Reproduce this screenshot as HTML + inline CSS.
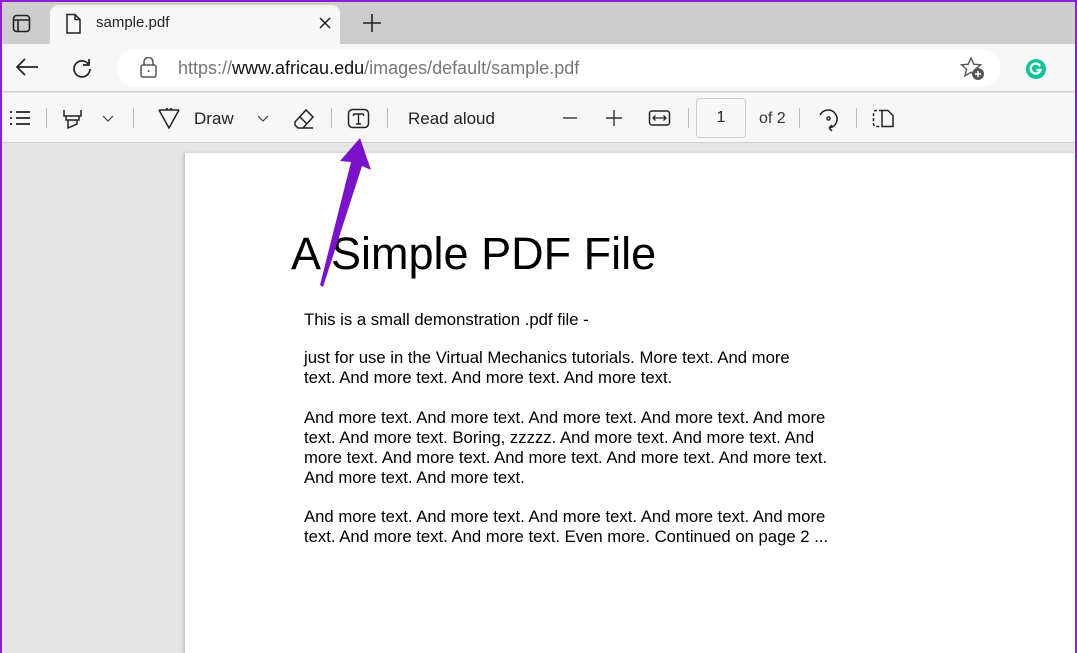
<!DOCTYPE html>
<html><head><style>
*{margin:0;padding:0;box-sizing:border-box}
html,body{width:1077px;height:653px;overflow:hidden}
body{font-family:"Liberation Sans",sans-serif;background:#e6e6e6;position:relative}
.frame{position:absolute;left:0;top:0;width:1077px;height:653px;border:2px solid #8a1fd6;border-bottom:none;pointer-events:none;z-index:10}
.tabbar{position:absolute;left:0;top:0;width:1077px;height:44px;background:#cdcdcd}
.tab{position:absolute;left:50px;top:5px;width:290px;height:39px;background:#f7f7f7;border-radius:8px 8px 0 0}
.nav{position:absolute;left:0;top:44px;width:1077px;height:48px;background:#f7f7f7;border-bottom:1px solid #d0d0d0}
.url{position:absolute;left:117px;top:5px;width:883px;height:38px;background:#fff;border-radius:19px}
.tool{position:absolute;left:0;top:93px;width:1077px;height:50px;background:#f7f7f7;border-bottom:1px solid #cfcfcf}
.t{position:absolute;font-size:17px;color:#222}
.sep{position:absolute;top:108px;width:1px;height:20px;background:#bbb}
.page{position:absolute;left:185px;top:153px;width:892px;height:500px;background:#fff;box-shadow:-2px 0 3px rgba(0,0,0,.15)}
.body{position:absolute;left:304px;font-size:16.7px;line-height:20px;color:#000;white-space:nowrap}
svg{position:absolute}
</style></head><body>
<div class="tabbar"><div class="tab"></div></div>
<svg style="left:12px;top:14px" width="20" height="20"><rect x="1.5" y="1.5" width="16" height="16" rx="3" fill="none" stroke="#222" stroke-width="1.6"/><path d="M1.5 6H17.5M6 6V17.5" stroke="#222" stroke-width="1.6"/></svg>
<svg style="left:64px;top:13px" width="20" height="22"><path d="M3 1.5H11L16 6.5V20H3Z M11 1.5V6.5H16" fill="none" stroke="#222" stroke-width="1.5"/></svg>
<div class="t" style="left:96px;top:14px;font-size:15px">sample.pdf</div>
<svg style="left:318px;top:16px" width="14" height="14"><path d="M2 2L12 12M12 2L2 12" stroke="#222" stroke-width="1.5"/></svg>
<svg style="left:362px;top:13px" width="20" height="20"><path d="M10 1V19M1 10H19" stroke="#222" stroke-width="1.6"/></svg>
<div class="nav"><div class="url"></div></div>
<svg style="left:14px;top:57px" width="26" height="20"><path d="M24 10H3M11 2L3 10L11 18" fill="none" stroke="#222" stroke-width="1.7"/></svg>
<svg style="left:70px;top:56px" width="24" height="24"><path d="M19 9A8 8 0 1 0 20 13M19 3V9H13" fill="none" stroke="#222" stroke-width="1.7"/></svg>
<svg style="left:139px;top:57px" width="20" height="22"><rect x="2" y="8" width="15" height="12" rx="2" fill="none" stroke="#555" stroke-width="1.5"/><path d="M5 8V5A4.5 4.5 0 0 1 14 5V8" fill="none" stroke="#555" stroke-width="1.5"/><circle cx="9.5" cy="14" r="1" fill="#555"/></svg>
<div class="t" style="left:178px;top:58px;font-size:18px;color:#777">https://<span style="color:#111">www.africau.edu</span>/images/default/sample.pdf</div>
<svg style="left:960px;top:56px" width="26" height="26"><path d="M11 2L13.8 8.2L20.5 8.8L15.4 13.2L17 19.8L11 16.3L5 19.8L6.6 13.2L1.5 8.8L8.2 8.2Z" fill="none" stroke="#555" stroke-width="1.4"/><circle cx="18" cy="18" r="6" fill="#555"/><path d="M18 15V21M15 18H21" stroke="#fff" stroke-width="1.5"/></svg>
<svg style="left:1025px;top:58px" width="22" height="22"><circle cx="11" cy="11" r="10" fill="#15c39a"/><path d="M15 8A5 5 0 1 0 15.5 12H11.5" fill="none" stroke="#fff" stroke-width="2.2"/></svg>
<div class="tool"></div>
<svg style="left:9px;top:110px" width="22" height="16"><path d="M1 2H3M1 8H3M1 14H3M7 2H21M7 8H21M7 14H21" stroke="#222" stroke-width="1.7"/></svg>
<div class="sep" style="left:46px"></div>
<svg style="left:62px;top:108px" width="22" height="22"><path d="M2 2V8H19V2M4 8V12H17V8M6 12V20L15 16V12" fill="none" stroke="#222" stroke-width="1.5"/></svg>
<svg style="left:102px;top:115px" width="12" height="8"><path d="M1 1L6 6L11 1" fill="none" stroke="#444" stroke-width="1.2"/></svg>
<div class="sep" style="left:133px"></div>
<svg style="left:158px;top:108px" width="22" height="22"><path d="M1 2H21M1 2L11 20L21 2M8 2L11 -2L14 2" fill="none" stroke="#222" stroke-width="1.5"/></svg>
<div class="t" style="left:194px;top:109px">Draw</div>
<svg style="left:257px;top:115px" width="12" height="8"><path d="M1 1L6 6L11 1" fill="none" stroke="#444" stroke-width="1.2"/></svg>
<svg style="left:292px;top:107px" width="24" height="24"><path d="M3 15L14 3L21 10L11 21H6L3 18Z M8 10L15 17 M11 21H21" fill="none" stroke="#222" stroke-width="1.5"/></svg>
<div class="sep" style="left:331px"></div>
<svg style="left:347px;top:108px" width="24" height="22"><rect x="1.5" y="1.5" width="20" height="18" rx="4" fill="none" stroke="#222" stroke-width="1.5"/><path d="M6.5 6H16.5M11.5 6V16M9 16H14M6.5 6V8M16.5 6V8" fill="none" stroke="#222" stroke-width="1.4"/></svg>
<div class="sep" style="left:387px"></div>
<div class="t" style="left:408px;top:109px">Read aloud</div>
<svg style="left:562px;top:110px" width="16" height="16"><path d="M1 8H15" stroke="#333" stroke-width="1.4"/></svg>
<svg style="left:605px;top:109px" width="18" height="18"><path d="M1 9H17M9 1V17" stroke="#333" stroke-width="1.4"/></svg>
<svg style="left:648px;top:109px" width="24" height="18"><rect x="1.5" y="2" width="20" height="14" rx="2.5" fill="none" stroke="#222" stroke-width="1.5"/><path d="M5 9H18M7.5 6.5L5 9L7.5 11.5M15.5 6.5L18 9L15.5 11.5" fill="none" stroke="#222" stroke-width="1.3"/></svg>
<div class="sep" style="left:688px"></div>
<div style="position:absolute;left:696px;top:98px;width:50px;height:40px;border:1px solid #ccc;border-radius:4px;background:#f7f7f7;font-size:16px;text-align:center;line-height:38px;color:#222">1</div>
<div class="t" style="left:759px;top:110px;font-size:16px;color:#333">of 2</div>
<div class="sep" style="left:799px"></div>
<svg style="left:816px;top:107px" width="26" height="26"><path d="M4 8A9 9 0 1 1 13 21M13 21L16 18M13 21L16 24" fill="none" stroke="#222" stroke-width="1.5"/><circle cx="12.5" cy="11.5" r="1.6" fill="none" stroke="#222" stroke-width="1.3"/></svg>
<div class="sep" style="left:856px"></div>
<svg style="left:872px;top:109px" width="24" height="20"><path d="M10 1.5H4A2.5 2.5 0 0 0 1.5 4V15A2.5 2.5 0 0 0 4 17.5H10" fill="none" stroke="#222" stroke-width="1.5" stroke-dasharray="3 2"/><path d="M10 1.5H16L21 6.5V17.5H10Z" fill="none" stroke="#222" stroke-width="1.5"/></svg>
<div class="page"></div>
<div style="position:absolute;left:291px;top:228px;font-size:45px;color:#000;white-space:nowrap">A Simple PDF File</div>
<div class="body" style="top:310px">This is a small demonstration .pdf file -</div>
<div class="body" style="top:348px">just for use in the Virtual Mechanics tutorials. More text. And more<br>text. And more text. And more text. And more text.</div>
<div class="body" style="top:408px">And more text. And more text. And more text. And more text. And more<br>text. And more text. Boring, zzzzz. And more text. And more text. And<br>more text. And more text. And more text. And more text. And more text.<br>And more text. And more text.</div>
<div class="body" style="top:507px">And more text. And more text. And more text. And more text. And more<br>text. And more text. And more text. Even more. Continued on page 2 ...</div>
<svg style="left:0;top:0;z-index:5" width="1077" height="653"><path d="M360 138L371 170L362 166L323 287L320 285L351 162L340 161Z" fill="#7a12c9"/></svg>
<div class="frame"></div>
</body></html>
